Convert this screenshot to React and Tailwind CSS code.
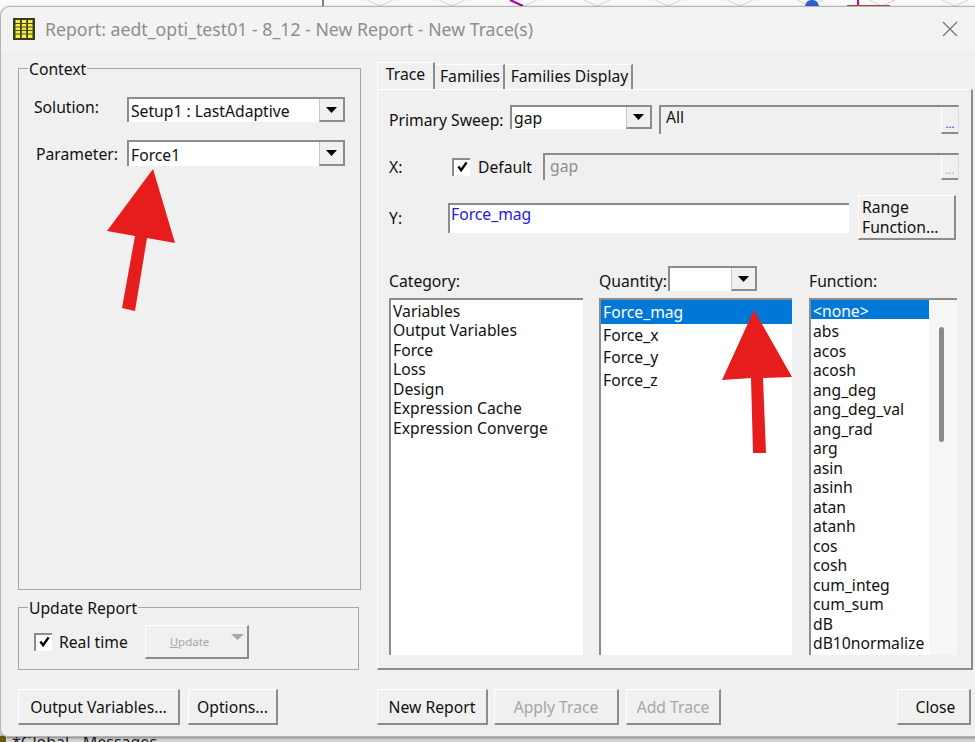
import React from "react";

const categories = ["Variables", "Output Variables", "Force", "Loss", "Design", "Expression Cache", "Expression Converge"];
const quantities = ["Force_mag", "Force_x", "Force_y", "Force_z"];
const functions = ["<none>", "abs", "acos", "acosh", "ang_deg", "ang_deg_val", "ang_rad", "arg", "asin", "asinh", "atan", "atanh", "cos", "cosh", "cum_integ", "cum_sum", "dB", "dB10normalize"];
const chevrons = [380, 452, 524, 597, 668, 740, 810, 882, 955];

const Caret = ({ disabled }) => (
  <svg width={disabled ? 13 : 11} height="6" viewBox="0 0 11 6" preserveAspectRatio="none">
    <path d="M0 0H11L5.5 6Z" fill={disabled ? "#a8a8a8" : "#000"} />
  </svg>
);

const Combo = ({ value, className, leading = "leading-[22px]" }) => (
  <div className={`flex border-t-2 border-l-2 border-[#8c8c8c] bg-white ${className}`}>
    <span className={`flex-1 pl-[2px] text-[15.7px] text-[#111] ${leading}`}>{value}</span>
    <span className="flex w-[26px] items-center justify-center border-r-2 border-b-2 border-l border-[#8c8c8c] border-l-[#c8c8c8] bg-[#f0f0f0]">
      <Caret />
    </span>
  </div>
);

const Button = ({ children, disabled, className = "" }) => (
  <button className={`flex h-[36px] items-center justify-center border-t border-l border-r-2 border-b-2 border-t-white border-l-white border-r-[#8c8c8c] border-b-[#8c8c8c] pt-[2px] text-[15.7px] ${disabled ? "text-[#a6a6a6]" : "text-[#111]"} ${className}`}>
    {children}
  </button>
);

const Checkbox = () => (
  <span className="flex h-[18px] w-[18px] items-start justify-center border-t-2 border-l-2 border-[#8c8c8c] bg-white pt-[1px]">
    <svg width="11" height="11" viewBox="0 0 12 12">
      <path d="M1.5 6L4.5 10L10.5 1.5" fill="none" stroke="#000" strokeWidth="2.6" />
    </svg>
  </span>
);

const Group = ({ title, className, children }) => (
  <div className={`relative border border-[#a6a6a6] ${className}`}>
    <span className="absolute -top-[10px] left-[9px] bg-[#f0f0f0] px-[1px] text-[15.7px] leading-[20px] text-[#111]">{title}</span>
    {children}
  </div>
);

const EllipsisButton = ({ disabled }) => (
  <span className={`flex w-[17px] items-end justify-center border-b-2 border-l border-b-[#8c8c8c] border-l-white pb-[3px] text-[11px] leading-[10px] ${disabled ? "text-[#a6a6a6]" : "text-[#2222dd]"}`}>...</span>
);

const ListBox = ({ className, children }) => (
  <div className={`h-[357px] overflow-hidden border-t-2 border-l-2 border-[#8c8c8c] ${className}`}>{children}</div>
);

const Arrow = ({ className, width, height, points }) => (
  <svg className={`absolute ${className}`} width={width} height={height} viewBox={`0 0 ${width} ${height}`}>
    <polygon points={points} fill="#e71c1c" />
  </svg>
);

export default function App() {
  return (
    <div className="relative h-[742px] w-[975px] overflow-hidden bg-[#f9f9f9] font-['Noto_Sans',sans-serif]">
      {/* model window behind the dialog */}
      <svg className="block" width="975" height="6" viewBox="0 0 975 6">
        <path d="M323 0V6" stroke="#555" strokeWidth="1.5" />
        {chevrons.map((x) => (
          <path key={x} d={`M${x - 13} 0L${x} 6L${x + 13} 0`} fill="none" stroke="#c4c8de" strokeWidth="0.8" />
        ))}
        <path d="M510 0L523 6" stroke="#b000b0" strokeWidth="2.2" />
        <path d="M805 6C806 2 808 0 812 0C816 0 818 2 819 6Z" fill="#3060d0" />
        <path d="M858 0V5" stroke="#c000c0" strokeWidth="2" />
        <path d="M847 5.5H890" stroke="#b05030" strokeWidth="1" />
      </svg>

      {/* dialog */}
      <div className="relative z-10 h-[731px] w-[985px] rounded-t-[10px] rounded-bl-[8px] border border-[#b4b4b4] bg-[#f0f0f0] shadow-[0_1px_3px_rgba(0,0,0,0.4)]">
        <div className="flex h-[44px] items-center rounded-t-[10px] bg-[#f3f3f3] pl-[12px] pr-[26px]">
          <svg width="22" height="22" viewBox="0 0 22 22">
            <rect x="0" y="0" width="22" height="22" fill="#3c3c24" />
            <rect x="2.5" y="2" width="4.5" height="18" fill="#f4ef3e" />
            <rect x="8.8" y="2" width="4.5" height="18" fill="#f4ef3e" />
            <rect x="15" y="2" width="4.5" height="18" fill="#f4ef3e" />
            <path d="M2 5.5H20M2 9H20M2 12.5H20M2 16H20" stroke="#4a4a28" strokeWidth="1" />
          </svg>
          <span className="ml-[10px] flex-1 text-[17.7px] text-[#8e8e8e]">Report: aedt_opti_test01 - 8_12 - New Report - New Trace(s)</span>
          <svg width="16" height="16" viewBox="0 0 16 16">
            <path d="M1 1L15 15M15 1L1 15" stroke="#777" strokeWidth="1.3" />
          </svg>
        </div>

        <div className="flex gap-[16px] pl-[17px] pt-[11px]">
          {/* left column */}
          <div className="flex w-[343px] flex-col pt-[6px]">
            <Group title="Context" className="h-[522px] w-[343px]">
              <div className="flex items-start pl-[15px] pt-[28px] text-[15.7px] text-[#111]">
                <span className="w-[93px] leading-[20px]">Solution:</span>
                <Combo value="Setup1 : LastAdaptive" leading="leading-[24px]" className="h-[25px] w-[218px]" />
              </div>
              <div className="flex items-start pl-[17px] pt-[18px] text-[15.7px] text-[#111]">
                <span className="mt-[3px] w-[91px]">Parameter:</span>
                <Combo value="Force1" leading="leading-[27px]" className="h-[26px] w-[218px]" />
              </div>
            </Group>
            <Group title="Update Report" className="mt-[17px] h-[63px] w-[341px]">
              <div className="flex items-center pl-[15px] pt-[17px] text-[15.7px] text-[#111]">
                <Checkbox />
                <span className="ml-[7px] mt-[2px] w-[86px]">Real time</span>
                <span className="relative flex h-[34px] w-[104px] items-center justify-center border-t border-l border-r-2 border-b-2 border-t-white border-l-white border-r-[#8c8c8c] border-b-[#8c8c8c] pr-[14px] text-[11.5px] text-[#a6a6a6]">
                  <span><u>U</u>pdate</span>
                  <span className="absolute right-[3px] top-[8px] flex"><Caret disabled /></span>
                </span>
              </div>
            </Group>
            <div className="mt-[19px] flex gap-[8px]">
              <Button className="w-[162px]">Output Variables...</Button>
              <Button className="w-[90px]">Options...</Button>
            </div>
          </div>

          {/* right column */}
          <div className="flex w-[596px] flex-col">
            <div className="flex h-[27px] items-end text-[15.7px] text-[#111]">
              <span className="flex h-[27px] w-[58px] items-center justify-center border-t border-l border-r-2 border-t-white border-l-white border-r-[#8c8c8c] pb-[2px]">Trace</span>
              <span className="flex h-[25px] w-[70px] items-center justify-center border-t border-r-2 border-t-white border-r-[#8c8c8c] pl-[2px]">Families</span>
              <span className="flex h-[25px] w-[128px] items-center justify-center border-t border-r-2 border-t-white border-r-[#8c8c8c] pl-[3px]">Families Display</span>
            </div>
            <div className="h-[581px] border-t border-l border-r-2 border-b-2 border-t-white border-l-white border-r-[#8c8c8c] border-b-[#8c8c8c] text-[15.7px] text-[#111]">
              <div className="flex pl-[11px] pt-[15px]">
                <span className="w-[121px] pt-[4px]">Primary Sweep:</span>
                <Combo value="gap" className="h-[24px] w-[142px]" />
                <div className="ml-[7px] flex h-[29px] w-[300px] border-t-2 border-l-2 border-r border-[#8c8c8c] border-r-[#dcdcdc]">
                  <span className="flex-1 pl-[5px] leading-[20px]">All</span>
                  <EllipsisButton />
                </div>
              </div>
              <div className="mt-[19px] flex items-center pl-[11px]">
                <span className="w-[63px] pt-[2px]">X:</span>
                <Checkbox />
                <span className="ml-[8px] w-[65px] pt-[2px]">Default</span>
                <div className="flex h-[27px] w-[416px] border-t-2 border-l-2 border-r border-[#8c8c8c] border-r-[#dcdcdc]">
                  <span className="flex-1 pl-[5px] leading-[22px] text-[#8e8e8e]">gap</span>
                  <EllipsisButton disabled />
                </div>
              </div>
              <div className="mt-[15px] flex items-center pl-[11px]">
                <span className="w-[59px] pt-[2px]">Y:</span>
                <div className="h-[30px] w-[401px] border-t-2 border-l-2 border-[#8c8c8c] bg-white pl-[1px] leading-[18px] text-[#2020e0]">Force_mag</div>
                <span className="ml-[9px] flex h-[45px] w-[98px] flex-col justify-center border-t border-l border-r-2 border-b-2 border-t-white border-l-white border-r-[#8c8c8c] border-b-[#8c8c8c] pl-[3px] leading-[20px]">
                  <span>Range</span>
                  <span>Function...</span>
                </span>
              </div>
              <div className="mt-[26px] flex pl-[11px]">
                <span className="w-[210px] pt-[4px]">Category:</span>
                <span className="w-[69px] pt-[4px]">Quantity:</span>
                <div className="flex h-[25px] w-[89px] border-t-2 border-l-2 border-[#8c8c8c] bg-white">
                  <span className="flex-1" />
                  <span className="flex w-[26px] items-center justify-center border-r-2 border-b-2 border-l border-[#8c8c8c] border-l-[#c8c8c8] bg-[#f0f0f0]">
                    <Caret />
                  </span>
                </div>
                <span className="ml-[52px] pt-[4px]">Function:</span>
              </div>
              <div className="mt-[4px] flex pl-[11px]">
                <ListBox className="w-[194px] bg-white pl-[2px] pt-[2px]">
                  {categories.map((item) => (
                    <div key={item} className="h-[19.5px] leading-[19.5px]">{item}</div>
                  ))}
                </ListBox>
                <ListBox className="ml-[16px] w-[193px] bg-white">
                  {quantities.map((item, i) => (
                    <div key={item} className={i === 0 ? "h-[24px] bg-[#0078d7] pl-[2px] leading-[24px] text-white" : "h-[22.5px] pl-[2px] leading-[22.5px]"}>{item}</div>
                  ))}
                </ListBox>
                <ListBox className="relative ml-[17px] flex w-[148px] bg-[#f6f6f6]">
                  <div className="w-[118px] bg-white">
                    {functions.map((item, i) => (
                      <div key={item} className={`h-[19.5px] pl-[2px] ${i === 0 ? "bg-[#0078d7] leading-[22px] text-white" : "leading-[25px]"}`}>{item}</div>
                    ))}
                  </div>
                  <div className="absolute left-[128px] top-[27px] h-[115px] w-[5px] rounded-full bg-[#8a8a8a]" />
                </ListBox>
              </div>
            </div>
            <div className="mt-[19px] flex">
              <Button className="w-[111px]">New Report</Button>
              <Button disabled className="ml-[6px] w-[125px]">Apply Trace</Button>
              <Button disabled className="ml-[7px] w-[95px]">Add Trace</Button>
              <Button className="ml-[176px] w-[74px] pl-[4px]">Close</Button>
            </div>
          </div>
        </div>
      </div>

      <Arrow className="left-[107px] top-[169px] z-20" width={68} height={142} points="46,0 0,62 28,67 15,139 28,142 40,69 68,74" />
      <Arrow className="left-[722px] top-[310px] z-20" width={70} height={143} points="32,0 0,70 29,68 31,143 44,143 41,68 70,67" />

      {/* messages strip behind the dialog */}
      <div className="absolute left-0 top-[734px] flex h-[8px] w-[975px] overflow-hidden bg-[#d4d4d4] text-[16px] leading-[16px] text-[#222]">
        <span className="mt-[2px] h-[6px] w-[6px] rounded-tr-[3px] bg-[#6a5a10]" />
        <span className="ml-[6px]">*Global - Messages</span>
      </div>
    </div>
  );
}
